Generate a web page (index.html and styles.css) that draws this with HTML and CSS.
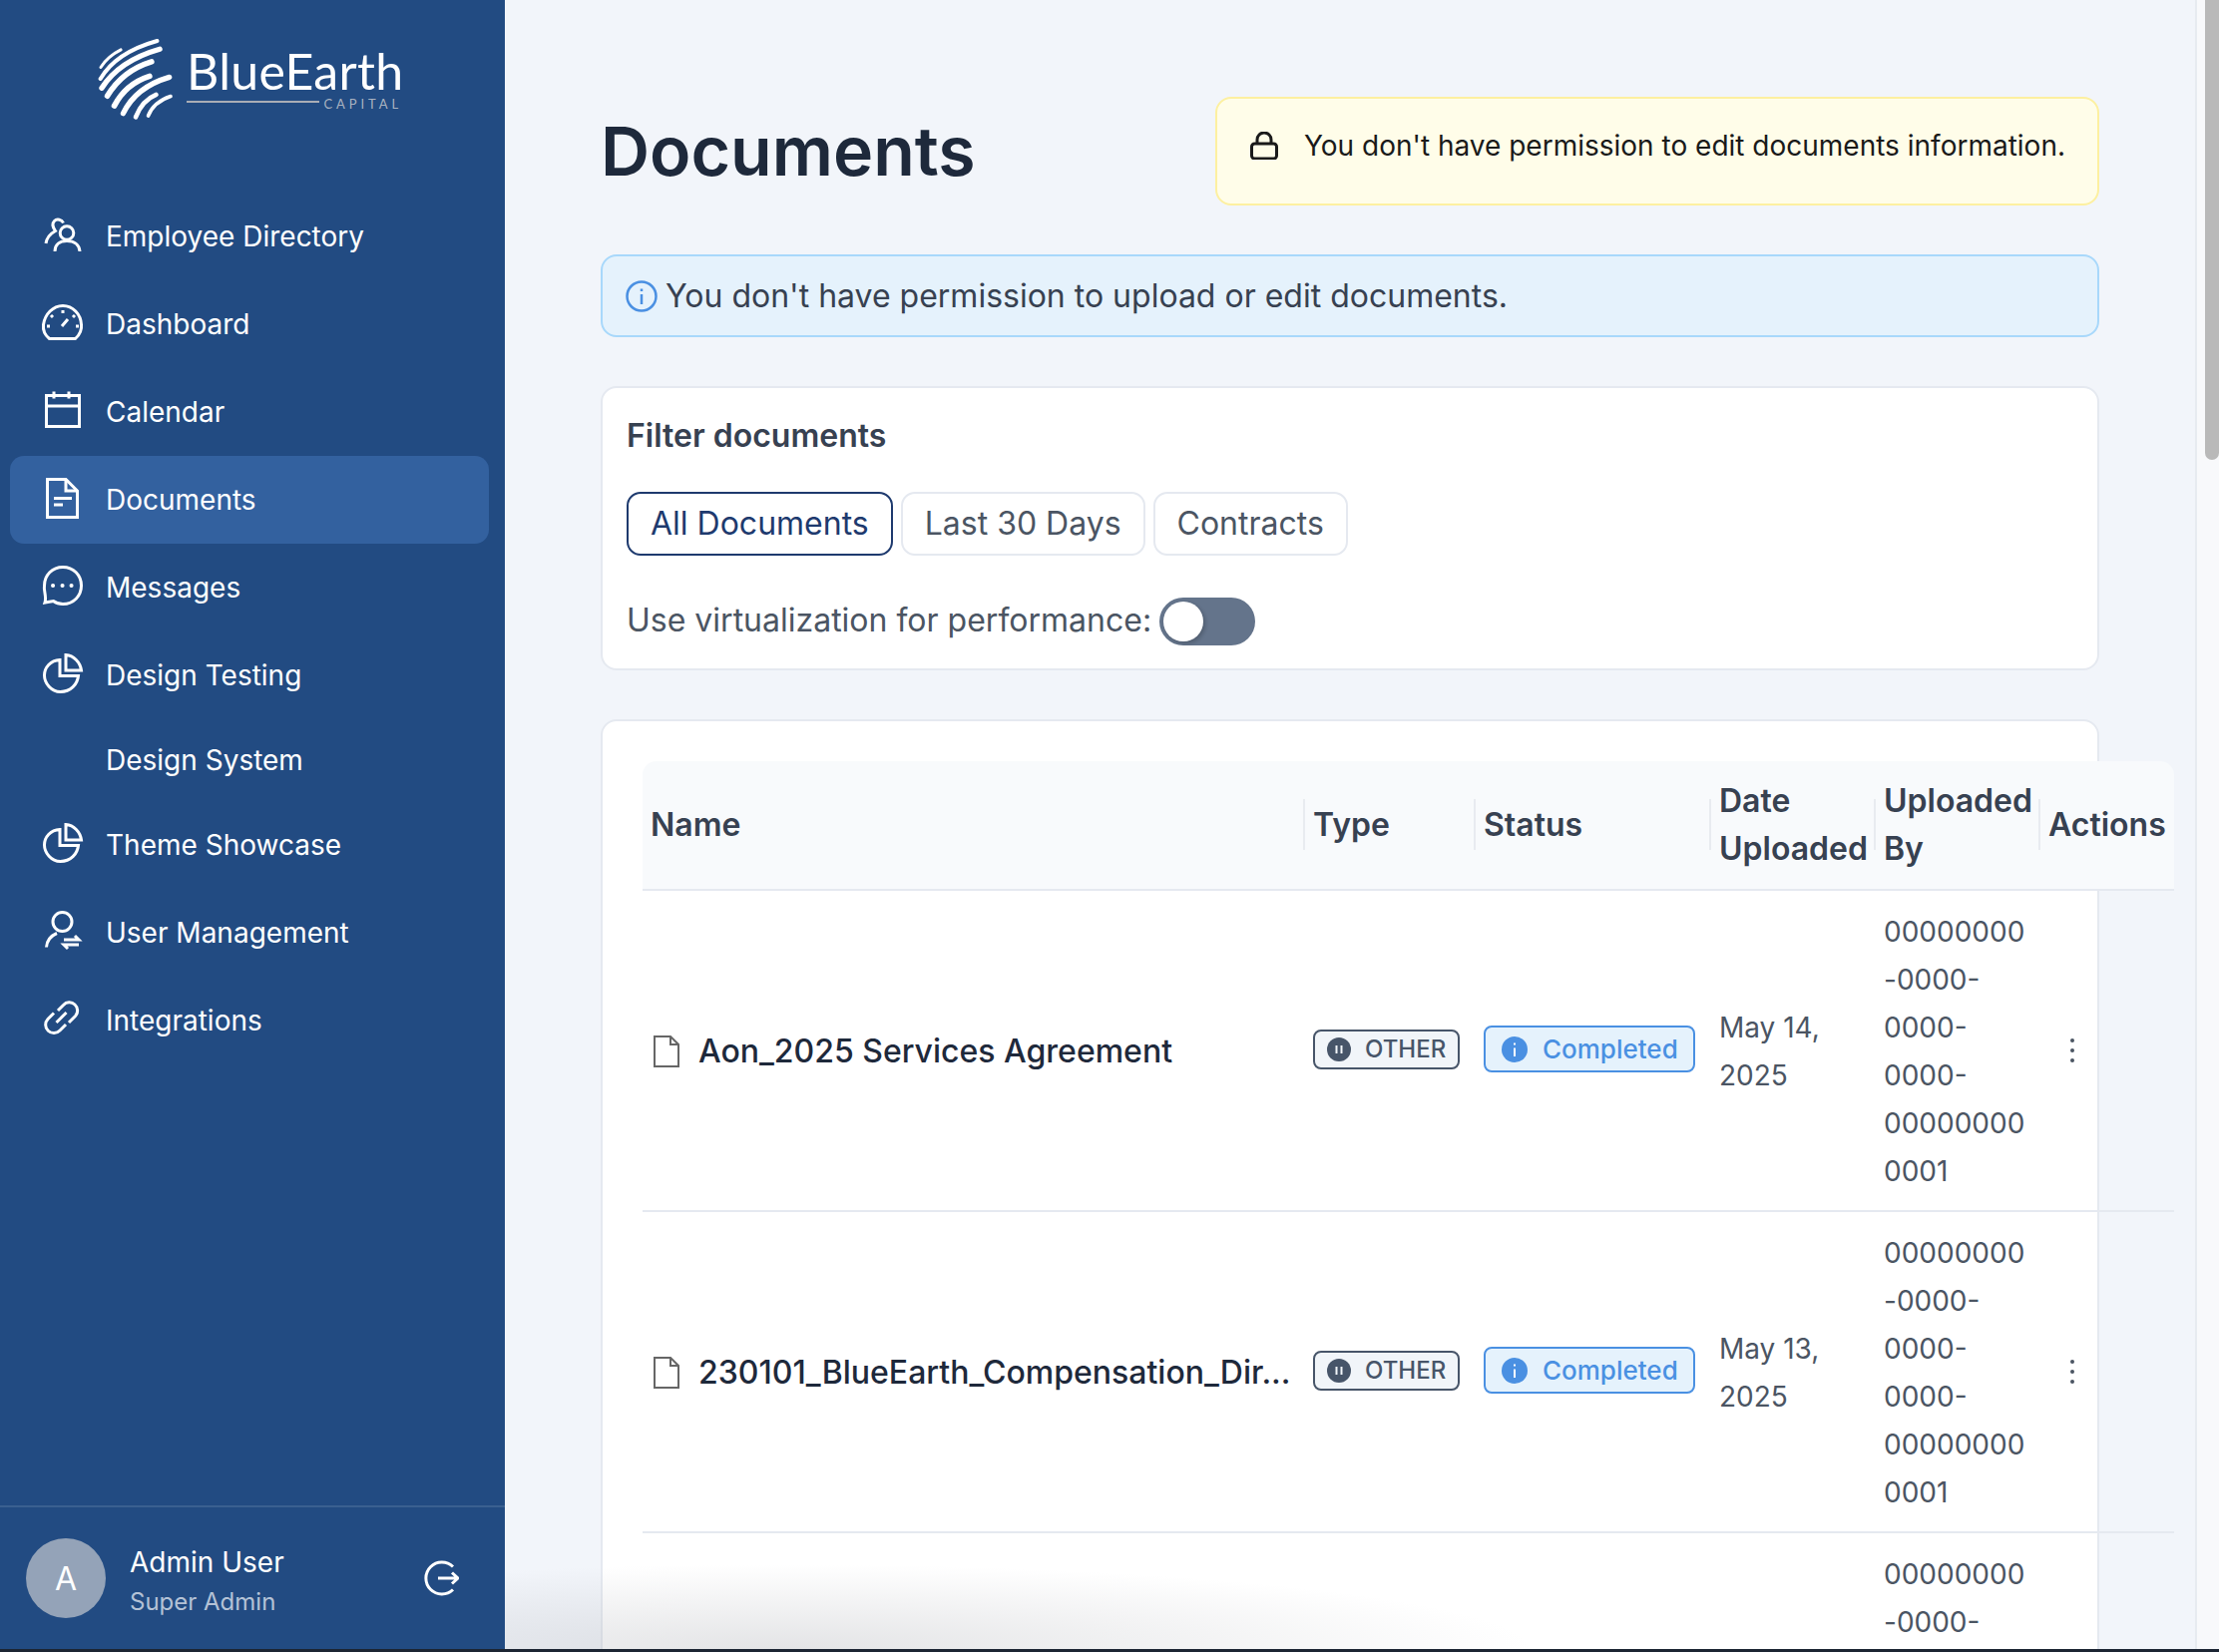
FILE: index.html
```html
<!DOCTYPE html>
<html lang="en">
<head>
	<meta charset="UTF-8">
	<meta name="viewport" content="width=device-width, initial-scale=1.0">
	<title>Documents</title>
	<link rel="stylesheet" href="styles.css">
</head>
<body>
	<div class="app">
		<aside class="sidebar">
			<div class="logo">
				<svg class="logo-globe" viewBox="55 55 230 250" fill="none" stroke="#fff" stroke-linecap="round">
					<path d="M64 145Q85 112 125 92" stroke-width="9"/>
					<path d="M63 180Q110 100 235 65" stroke-width="12"/>
					<path d="M67 208Q120 125 243 90" stroke-width="16"/>
					<path d="M84 232Q130 155 218 128" stroke-width="17"/>
					<path d="M105 262Q140 195 212 172" stroke-width="17"/>
					<path d="M132 285Q170 205 272 175" stroke-width="16"/>
					<path d="M170 296Q190 245 232 228" stroke-width="14"/>
					<path d="M208 292Q225 250 276 233" stroke-width="11"/>
				</svg>
				<div class="logo-text">
					<div class="logo-name">BlueEarth</div>
					<div class="logo-sub"><span class="logo-rule"></span><span>CAPITAL</span></div>
				</div>
			</div>

			<nav class="nav">
				<a class="nav-item">
					<svg class="nav-icon" viewBox="0 0 40 40"><circle cx="25" cy="18.500" r="6.800"/><path d="M13 37C13 30 18 26.500 25 26.500S37.500 30 38 37"/><path d="M21.500 8.500C20 5 15 4 12.500 6.500 10 9 11 13 13.500 16.500 9 19 5 22 4 29"/></svg>
					<span>Employee Directory</span>
				</a>
				<a class="nav-item">
					<svg class="nav-icon" viewBox="0 0 40 40"><path d="M7.500 36.500C2.500 32.500 1 27 1.500 22.500 3 12 11 3.500 21 3.500S39 12 39.500 22.500C40 27 38 32.500 33.500 36.500Z"/><path d="M21 8v3M9 13l2 2M33 13l-2 2M5 24h3M34 24h3M20 24l6-7"/></svg>
					<span>Dashboard</span>
				</a>
				<a class="nav-item">
					<svg class="nav-icon" viewBox="0 0 40 40"><rect x="4.500" y="5.500" width="33" height="31"/><path d="M4.500 16h33M12 1.500v7M27 1.500v7"/></svg>
					<span>Calendar</span>
				</a>
				<a class="nav-item active">
					<svg class="nav-icon" viewBox="0 0 40 40"><path d="M5.500 1.500H24L35.500 13V39.500H5.500Z"/><path d="M24 1.500V13H35.500M12 20.500H30M12 27H21"/></svg>
					<span>Documents</span>
				</a>
				<a class="nav-item">
					<svg class="nav-icon" viewBox="0 0 40 40"><path d="M21 1.500C31.500 1.500 39.500 9.500 39.500 20S31.500 38.500 21 38.500C16.500 38.500 13.500 37 11.500 35.500L3 37C4 34 3.500 30.500 3 27.500 2.500 25 2 22.500 2.500 20 2.500 9.500 10.500 1.500 21 1.500Z"/><path class="dot" d="M11 20h.1M20.500 20h.1M29.500 20h.1"/></svg>
					<span>Messages</span>
				</a>
				<a class="nav-item">
					<svg class="nav-icon" viewBox="0 0 40 40"><path d="M18 6.500C8.500 7 2.500 14 2.500 22S9.500 38.500 18.500 38.500C29 38.500 35.500 31 36.500 22.500H18Z"/><path d="M24 1.500C32 2 38.500 9 39.500 17H24Z"/></svg>
					<span>Design Testing</span>
				</a>
				<a class="nav-item">
					<span class="nav-spacer"></span>
					<span>Design System</span>
				</a>
				<a class="nav-item">
					<svg class="nav-icon" viewBox="0 0 40 40"><path d="M18 6.500C8.500 7 2.500 14 2.500 22S9.500 38.500 18.500 38.500C29 38.500 35.500 31 36.500 22.500H18Z"/><path d="M24 1.500C32 2 38.500 9 39.500 17H24Z"/></svg>
					<span>Theme Showcase</span>
				</a>
				<a class="nav-item">
					<svg class="nav-icon" viewBox="0 0 40 40"><circle cx="20.500" cy="11" r="9.500"/><path d="M4.500 36.500C5 30 8 25.500 15 22.500"/><path d="M22 29h15l-4-4M37 34H22l4 4"/></svg>
					<span>User Management</span>
				</a>
				<a class="nav-item">
					<svg class="nav-icon" viewBox="0 0 40 40"><path d="M16 12 21.500 6.500A8 8 0 0 1 33.500 17.500L27 24"/><path d="M24 26 18 32A8 8 0 0 1 6 20.500L12 14.500"/><path d="M14.500 24 24.500 14"/></svg>
					<span>Integrations</span>
				</a>
			</nav>

			<div class="user-box">
				<div class="avatar">A</div>
				<div class="user-info">
					<div class="user-name">Admin User</div>
					<div class="user-role">Super Admin</div>
				</div>
				<svg class="logout" viewBox="0 0 36 36"><path d="M30 6.500A16 16 0 1 0 30 29.500"/><path d="M15 18H35M29 12.500 35 18 29 23.500"/></svg>
			</div>
		</aside>

		<main class="main">
			<div class="page-head">
				<h1>Documents</h1>
				<div class="notice">
					<svg class="notice-icon" viewBox="0 0 28 28"><rect x="1.500" y="12" width="25" height="15" rx="3"/><path d="M7 12V8a7 7 0 0 1 14 0v4"/></svg>
					<span>You don't have permission to edit documents information.</span>
				</div>
			</div>

			<div class="info-alert">
				<svg class="info-icon" viewBox="0 0 32 32"><circle cx="16" cy="16" r="14.500"/><path d="M16 14V24M16 8.500v2.500"/></svg>
				<span>You don't have permission to upload or edit documents.</span>
			</div>

			<section class="card filter-card">
				<h2>Filter documents</h2>
				<div class="filter-btns">
					<button class="filter-btn selected">All Documents</button>
					<button class="filter-btn">Last 30 Days</button>
					<button class="filter-btn">Contracts</button>
				</div>
				<div class="virtual-row">
					<span class="virtual-label">Use virtualization for performance:</span>
					<span class="toggle"><span class="knob"></span></span>
				</div>
			</section>

			<section class="card table-card">
				<table class="doc-table">
					<colgroup>
						<col class="col-name"><col class="col-type"><col class="col-status"><col class="col-date"><col class="col-by"><col class="col-actions">
					</colgroup>
					<thead>
						<tr>
							<th>Name</th>
							<th>Type</th>
							<th>Status</th>
							<th>Date Uploaded</th>
							<th>Uploaded By</th>
							<th>Actions</th>
						</tr>
					</thead>
					<tbody>
						<tr>
							<td>
								<div class="doc-name">
									<svg class="file-icon" viewBox="0 0 26 32"><path d="M1 1H17L25 9V31H1Z"/><path d="M17 1V9H25"/></svg>
									<span>Aon_2025 Services Agreement</span>
								</div>
							</td>
							<td>
								<span class="badge-type"><svg class="badge-icon" viewBox="0 0 24 24"><circle cx="12" cy="12" r="12" fill="#475569"/><path d="M9.500 8v8M14.500 8v8" stroke="#f1f5f9" stroke-width="2"/></svg>OTHER</span>
							</td>
							<td>
								<span class="badge-status"><svg class="badge-icon" viewBox="0 0 26 26"><circle cx="13" cy="13" r="13" fill="#4a90e2"/><path d="M13 11.500V20M13 6.500v2" stroke="#fff" stroke-width="2"/></svg>Completed</span>
							</td>
							<td>May 14, 2025</td>
							<td class="uploader">00000000-0000-0000-0000-000000000001</td>
							<td class="actions"><span class="kebab"><i></i><i></i><i></i></span></td>
						</tr>
						<tr>
							<td>
								<div class="doc-name">
									<svg class="file-icon" viewBox="0 0 26 32"><path d="M1 1H17L25 9V31H1Z"/><path d="M17 1V9H25"/></svg>
									<span>230101_BlueEarth_Compensation_Dir...</span>
								</div>
							</td>
							<td>
								<span class="badge-type"><svg class="badge-icon" viewBox="0 0 24 24"><circle cx="12" cy="12" r="12" fill="#475569"/><path d="M9.500 8v8M14.500 8v8" stroke="#f1f5f9" stroke-width="2"/></svg>OTHER</span>
							</td>
							<td>
								<span class="badge-status"><svg class="badge-icon" viewBox="0 0 26 26"><circle cx="13" cy="13" r="13" fill="#4a90e2"/><path d="M13 11.500V20M13 6.500v2" stroke="#fff" stroke-width="2"/></svg>Completed</span>
							</td>
							<td>May 13, 2025</td>
							<td class="uploader">00000000-0000-0000-0000-000000000001</td>
							<td class="actions"><span class="kebab"><i></i><i></i><i></i></span></td>
						</tr>
						<tr>
							<td></td>
							<td></td>
							<td></td>
							<td></td>
							<td class="uploader">00000000-0000-0000-0000-000000000001</td>
							<td></td>
						</tr>
					</tbody>
				</table>
			</section>
			<div class="bottom-fade"></div>
		</main>

		<div class="scrollbar"><div class="scroll-thumb"></div></div>
	</div>
</body>
</html>
```

FILE: styles.css
```css
* {
	box-sizing: border-box;
}

body {
	margin: 0;
	background-color: #1c2533;
	font-family: Inter, "Noto Sans", sans-serif;
	color: #374151;
}

.app {
	display: flex;
	height: 1653px;
	overflow: hidden;
}

/* Sidebar */
.sidebar {
	display: flex;
	flex-direction: column;
	flex: none;
	width: 506px;
	padding-top: 37px;
	background-color: #224b82;
	color: #fff;
}

.logo {
	display: flex;
	align-items: flex-start;
	gap: 13px;
	height: 156px;
	padding-left: 98px;
}

.logo-globe {
	width: 76px;
	height: 84px;
}

.logo-text {
	width: 216px;
}

.logo-name {
	font-family: Lato, sans-serif;
	font-size: 50px;
	letter-spacing: 0.300px;
	line-height: 46px;
	margin-top: 11px;
}

.logo-sub {
	display: flex;
	align-items: flex-start;
	gap: 5px;
	margin-top: 2px;
	font-family: Lato, sans-serif;
	font-size: 13px;
	letter-spacing: 3.900px;
	line-height: 16px;
	color: #a9b2c0;
}

.logo-rule {
	width: 133px;
	height: 2px;
	margin-top: 5px;
	background-color: #a9adb5;
}

.nav {
	flex: 1;
	padding: 0 16px 0 10px;
}

.nav-item {
	display: flex;
	align-items: center;
	gap: 24px;
	padding: 24px 32px;
	border-radius: 14px;
	font-size: 28px;
	font-weight: 400;
	line-height: 34px;
}

.nav-item.active {
	background-color: #33619f;
}

.nav-icon {
	flex: none;
	width: 40px;
	height: 40px;
	overflow: visible;
	fill: none;
	stroke: #fff;
	stroke-width: 3;
	transform: translateY(-2px);
}

.nav-spacer {
	flex: none;
	width: 40px;
}

.dot {
	stroke-width: 4;
	stroke-linecap: round;
}

.user-box {
	display: flex;
	align-items: center;
	height: 144px;
	padding: 0 46px 0 26px;
	border-top: 2px solid #3a6090;
}

.avatar {
	display: flex;
	align-items: center;
	justify-content: center;
	flex: none;
	width: 80px;
	height: 80px;
	border-radius: 50%;
	background-color: #94a3b8;
	font-size: 32px;
}

.user-info {
	flex: 1;
	margin-left: 24px;
	padding-top: 5px;
}

.user-name {
	font-size: 28px;
	font-weight: 400;
	line-height: 40px;
}

.user-role {
	margin-top: 2px;
	font-size: 24px;
	line-height: 36px;
	color: #b4c2d6;
}

.logout {
	flex: none;
	width: 36px;
	height: 36px;
	fill: none;
	stroke: #fff;
	stroke-width: 3;
}

/* Main column */
.main {
	position: relative;
	flex: 1;
	padding: 97px 96px 0;
	overflow: hidden;
	background-color: #f2f5fa;
}

.page-head {
	display: flex;
	align-items: center;
	justify-content: space-between;
	margin-bottom: 49px;
}

h1 {
	margin: 0;
	padding-bottom: 2px;
	font-size: 68px;
	font-weight: 600;
	line-height: 80px;
	color: #1e293b;
}

.notice {
	display: flex;
	align-items: flex-start;
	gap: 26px;
	height: 109px;
	padding: 27px 32px 0 33px;
	border: 2px solid #fdf0a0;
	border-radius: 16px;
	background-color: #fffde9;
	font-size: 28px;
	line-height: 40px;
	color: #1a1a1a;
}

.notice-icon {
	flex: none;
	width: 28px;
	height: 28px;
	margin-top: 6px;
	fill: none;
	stroke: #1a1a1a;
	stroke-width: 3;
}

.info-alert {
	display: flex;
	align-items: center;
	gap: 8px;
	height: 83px;
	margin-bottom: 49px;
	padding: 0 23px;
	border: 2px solid #a8d8fb;
	border-radius: 16px;
	background-color: #e5f2fc;
	font-size: 32px;
	color: #374151;
}

.info-icon {
	flex: none;
	width: 32px;
	height: 32px;
	fill: none;
	stroke: #4a90e2;
	stroke-width: 2.500;
}

.card {
	border: 2px solid #e5e9f0;
	border-radius: 16px;
	background-color: #fff;
}

.filter-card {
	height: 285px;
	margin-bottom: 49px;
	padding: 24px 24px 0;
}

h2 {
	margin: 0 0 32px;
	font-size: 32px;
	font-weight: 600;
	line-height: 48px;
	color: #374151;
}

.filter-btns {
	display: flex;
	gap: 8px;
}

.filter-btn {
	height: 64px;
	padding: 0 22px 2px;
	border: 2px solid #e5e9f0;
	border-radius: 14px;
	background-color: #fff;
	font-family: inherit;
	font-size: 32px;
	color: #4b5563;
}

.filter-btn.selected {
	border-color: #1e3a6e;
	color: #1e3a6e;
}

.virtual-row {
	display: flex;
	align-items: center;
	gap: 8px;
	margin-top: 42px;
	font-size: 32px;
	color: #4b5563;
}

.virtual-label {
	padding-bottom: 3px;
}

.toggle {
	display: block;
	width: 96px;
	height: 48px;
	padding: 4px;
	border-radius: 24px;
	background-color: #64748b;
}

.knob {
	display: block;
	width: 40px;
	height: 40px;
	border-radius: 50%;
	background-color: #fff;
	box-shadow: 2px 2px 4px rgba(0, 0, 0, 0.2);
}

.table-card {
	height: 1200px;
	padding: 40px 0 0 40px;
}

.doc-table {
	width: 1535px;
	table-layout: fixed;
	border-collapse: collapse;
}

.col-name { width: 664px; }
.col-type { width: 171px; }
.col-status { width: 236px; }
.col-date { width: 165px; }
.col-by { width: 165px; }
.col-actions { width: 134px; }

.doc-table th {
	position: relative;
	height: 129px;
	padding: 16px 8px 16px 8px;
	border-bottom: 2px solid #e5e9f0;
	background-color: #f8fafc;
	font-size: 32px;
	font-weight: 600;
	line-height: 48px;
	text-align: left;
	color: #374151;
}

.doc-table th:first-child {
	border-top-left-radius: 14px;
}

.doc-table th:last-child {
	border-top-right-radius: 14px;
}

.doc-table th:not(:last-child)::after {
	content: "";
	position: absolute;
	top: 38px;
	right: 0;
	width: 2px;
	height: 51px;
	background-color: #e8ebf0;
}

.doc-table td {
	padding: 17px 8px 15px;
	border-bottom: 2px solid #e5e9f0;
	font-size: 28px;
	line-height: 48px;
	color: #4b5563;
}

.uploader {
	overflow-wrap: break-word;
}

.doc-name {
	display: flex;
	align-items: center;
	gap: 19px;
	padding-left: 3px;
	padding-bottom: 1px;
	font-size: 32px;
	font-weight: 500;
	color: #1e293b;
	white-space: nowrap;
}

.file-icon {
	flex: none;
	width: 26px;
	height: 32px;
	fill: none;
	stroke: #666;
	stroke-width: 2;
}

.badge-type,
.badge-status {
	display: inline-flex;
	align-items: center;
	border-radius: 8px;
	vertical-align: middle;
}

.badge-type {
	gap: 14px;
	height: 40px;
	margin-bottom: 7px;
	padding: 0 12px;
	border: 2px solid #475569;
	background-color: #f1f5f9;
	font-size: 24px;
	font-weight: 500;
	color: #475569;
}

.badge-type .badge-icon {
	width: 24px;
	height: 24px;
}

.badge-status {
	gap: 15px;
	height: 47px;
	margin-bottom: 5px;
	padding: 0 15px 0 16px;
	border: 2px solid #4a90e2;
	background-color: #e5f2fc;
	font-size: 26px;
	font-weight: 500;
	color: #4a90e2;
}

.badge-status .badge-icon {
	width: 26px;
	height: 26px;
}

.kebab {
	display: inline-flex;
	flex-direction: column;
	gap: 6px;
	margin: 0 0 7px 22px;
	vertical-align: middle;
}

.kebab i {
	display: block;
	width: 4px;
	height: 4px;
	border-radius: 50%;
	background-color: #4b5563;
}

.bottom-fade {
	position: absolute;
	left: 0;
	bottom: 0;
	width: 1100px;
	height: 100px;
	background: radial-gradient(ellipse 750px 85px at 280px 100%, rgba(170, 172, 178, 0.32), rgba(170, 172, 178, 0));
	pointer-events: none;
}

.scrollbar {
	flex: none;
	width: 24px;
	border-left: 2px solid #e7ebf0;
	background-color: #f8f9fb;
}

.scroll-thumb {
	width: 14px;
	height: 461px;
	margin-left: 8px;
	border-radius: 0 0 7px 7px;
	background-color: #b9b9b9;
}
```
